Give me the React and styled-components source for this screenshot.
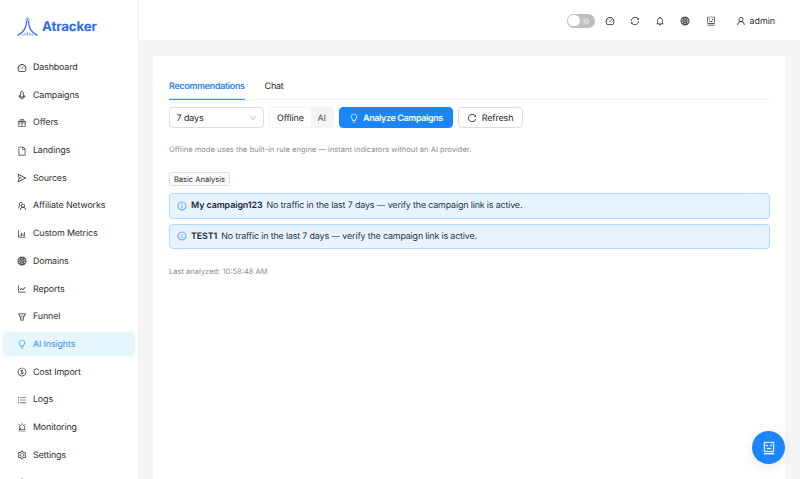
import React from 'react';
import styled, { createGlobalStyle } from 'styled-components';
import {
  AiOutlineDashboard, AiOutlineRocket, AiOutlineGift, AiOutlineFile, AiOutlineSend,
  AiOutlineTeam, AiOutlineBarChart, AiOutlineGlobal, AiOutlineLineChart, AiOutlineFunnelPlot,
  AiOutlineBulb, AiOutlineDollar, AiOutlineUnorderedList, AiOutlineAlert, AiOutlineSetting,
  AiOutlineSync, AiOutlineBell, AiOutlineRobot, AiOutlineUser, AiOutlineInfoCircle,
  AiOutlineReload, AiOutlineDown, AiOutlineSun, AiOutlineQuestionCircle,
} from 'react-icons/ai';

const GlobalStyle = createGlobalStyle`
  *, *::before, *::after { box-sizing: border-box; }
  body {
    margin: 0;
    overflow: hidden;
    background: #f5f5f5;
    color: #2b2b2b;
    font-family: Inter, "Liberation Sans", sans-serif;
    font-size: 8.9px;
    letter-spacing: -0.15px;
    text-rendering: geometricPrecision;
  }
  button { font: inherit; color: inherit; letter-spacing: inherit; text-rendering: inherit; }
  svg { display: block; flex: none; }
`;

const Shell = styled.div`
  display: flex;
  height: 479px;
  overflow: hidden;
`;

const Sidebar = styled.aside`
  width: 139px;
  flex: none;
  background: #fff;
  border-right: 1px solid #f0f0f0;
  overflow: hidden;
`;

const Brand = styled.div`
  display: flex;
  align-items: center;
  gap: 4.5px;
  height: 53.4px;
  padding-left: 16.5px;
`;

const BrandName = styled.span`
  padding-top: 1px;
  color: #2e6bea;
  font-size: 13.3px;
  font-weight: 700;
  letter-spacing: -0.15px;
`;

const Menu = styled.nav`
  display: flex;
  flex-direction: column;
  gap: 3.4px;
  padding: 1.6px 3px 0 2.5px;
`;

const MenuItem = styled.a`
  display: flex;
  align-items: center;
  flex: none;
  gap: 5.8px;
  height: 24.3px;
  padding: 0.8px 0 0 14.7px;
  border-radius: 4.5px;
  color: ${(p) => (p.$active ? '#3c8eff' : '#2e2e2e')};
  background: ${(p) => (p.$active ? '#e6f6ff' : 'transparent')};
  letter-spacing: -0.13px;
`;

const GlobeIcon = styled(AiOutlineGlobal)`
  stroke-width: 16px;
`;

const Main = styled.div`
  flex: 1;
  min-width: 0;
  display: flex;
  flex-direction: column;
`;

const TopBar = styled.header`
  display: flex;
  align-items: center;
  justify-content: flex-end;
  flex: none;
  height: 40px;
  padding: 1px 25px 0 0;
  background: #fff;
`;

const ThemeSwitch = styled.div`
  display: flex;
  align-items: center;
  justify-content: space-between;
  width: 28px;
  height: 14px;
  margin-right: 10px;
  padding: 0 4.5px 0 1.2px;
  border-radius: 7px;
  background: #bfbfbf;
  color: #fff;
  svg { stroke-width: 20px; }
`;

const SwitchKnob = styled.span`
  width: 11.6px;
  height: 11.6px;
  border-radius: 50%;
  background: #fff;
`;

const BarIcons = styled.div`
  display: flex;
  gap: 15.2px;
`;

const Account = styled.div`
  display: flex;
  align-items: center;
  gap: 4px;
  margin-left: 20px;
  letter-spacing: -0.02px;
`;

const AccountName = styled.span`
  padding-top: 1px;
`;

const Panel = styled.main`
  flex: 1;
  margin: 16px 15px 0 14px;
  padding: 16px 15px 0 16px;
  background: #fff;
`;

const Tabs = styled.div`
  display: flex;
  gap: 20px;
  height: 28px;
  border-bottom: 1px solid #f3f3f3;
`;

const Tab = styled.div`
  display: flex;
  align-items: center;
  height: 28px;
  color: ${(p) => (p.$active ? '#3484f7' : '#222')};
  text-shadow: ${(p) => (p.$active ? '0 0 0.25px currentColor' : 'none')};
  box-shadow: ${(p) => (p.$active ? 'inset 0 -1.3px #3f91ff' : 'none')};
`;

const Toolbar = styled.div`
  display: flex;
  align-items: center;
  gap: 5.1px;
  height: 21px;
  margin-top: 7px;
`;

const Select = styled.div`
  display: flex;
  align-items: center;
  justify-content: space-between;
  width: 95px;
  height: 21px;
  padding: 1px 6px 0 6.5px;
  border: 1px solid #dedede;
  border-radius: 4px;
  color: #222;
  letter-spacing: -0.05px;
  svg { color: #b5b5b5; }
`;

const Segmented = styled.div`
  display: flex;
  width: 65px;
  height: 21px;
  padding: 1.3px;
  border-radius: 4px;
  background: #f4f4f4;
`;

const Segment = styled.div`
  display: flex;
  align-items: center;
  justify-content: center;
  width: ${(p) => p.$width};
  padding: 1px 1px 0 0;
  border-radius: 3px;
  background: ${(p) => (p.$selected ? '#fff' : 'transparent')};
  color: ${(p) => (p.$selected ? '#222' : '#555')};
`;

const Button = styled.button`
  display: flex;
  align-items: center;
  justify-content: center;
  gap: 4.5px;
  width: ${(p) => p.$width};
  height: 21px;
  padding: 1px 1px 0 0;
  border: 1px solid ${(p) => (p.$primary ? '#1b86fb' : '#dedede')};
  border-radius: 4px;
  background: ${(p) => (p.$primary ? '#1b86fb' : '#fff')};
  color: ${(p) => (p.$primary ? '#fff' : '#222')};
  font-weight: ${(p) => (p.$primary ? 600 : 400)};
  letter-spacing: ${(p) => (p.$primary ? '-0.33px' : '-0.1px')};
`;

const Note = styled.p`
  margin: ${(p) => p.$top} 0 0;
  color: #8f8f8f;
  font-size: 7.55px;
  line-height: 12px;
  letter-spacing: 0;
`;

const Tag = styled.span`
  display: flex;
  align-items: center;
  justify-content: center;
  width: 61px;
  height: 14px;
  margin-top: 16px;
  border: 1px solid #dfdfdf;
  border-radius: 2.5px;
  background: #fafafa;
  color: #333;
  font-size: 7.55px;
  letter-spacing: 0;
`;

const AlertList = styled.div`
  display: flex;
  flex-direction: column;
  gap: 5px;
  margin-top: 7.3px;
`;

const Alert = styled.div`
  display: flex;
  align-items: center;
  height: 25.3px;
  padding: 0 0 0 6.5px;
  border: 1px solid #b3d7ff;
  border-radius: 4px;
  background: #e6f4ff;
  color: #26323c;
  svg { color: #4a93ff; margin-right: 4.5px; stroke-width: 12px; }
  strong { margin-right: 4px; font-weight: 600; color: #1c2630; letter-spacing: -0.08px; }
`;

const ChatButton = styled.button`
  position: fixed;
  right: 15px;
  bottom: 15px;
  display: flex;
  align-items: center;
  justify-content: center;
  width: 33px;
  height: 33px;
  padding: 0;
  border: 0;
  border-radius: 50%;
  background: #1b86fb;
  color: #fff;
  box-shadow: 0 3px 12px rgba(0, 0, 0, 0.09);
  svg { stroke-width: 18px; }
`;

const menuItems = [
  [AiOutlineDashboard, 'Dashboard'],
  [AiOutlineRocket, 'Campaigns'],
  [AiOutlineGift, 'Offers'],
  [AiOutlineFile, 'Landings'],
  [AiOutlineSend, 'Sources'],
  [AiOutlineTeam, 'Affiliate Networks'],
  [AiOutlineBarChart, 'Custom Metrics'],
  [GlobeIcon, 'Domains'],
  [AiOutlineLineChart, 'Reports'],
  [AiOutlineFunnelPlot, 'Funnel'],
  [AiOutlineBulb, 'AI Insights'],
  [AiOutlineDollar, 'Cost Import'],
  [AiOutlineUnorderedList, 'Logs'],
  [AiOutlineAlert, 'Monitoring'],
  [AiOutlineSetting, 'Settings'],
  [AiOutlineQuestionCircle, ''],
];

const barIcons = [AiOutlineDashboard, AiOutlineSync, AiOutlineBell, GlobeIcon, AiOutlineRobot];

const alerts = [
  { name: 'My campaign123', text: 'No traffic in the last 7 days — verify the campaign link is active.' },
  { name: 'TEST1', text: 'No traffic in the last 7 days — verify the campaign link is active.' },
];

function TowerLogo() {
  return (
    <svg width="21" height="20" viewBox="0 0 21 20" fill="none">
      <circle cx="10.5" cy="2.5" r="1.8" stroke="#7dabf5" strokeWidth="0.9" />
      <circle cx="10.5" cy="2.6" r="0.8" fill="#2c62ec" />
      <path d="M9.5 4.4C9.4 11 7.2 15.2 1 18.2M11.5 4.4C11.6 11 13.8 15.2 20 18.2" stroke="#3568ec" strokeWidth="1.3" strokeLinecap="round" />
      <path d="M5.8 18.6v-1.5M8.1 18.6v-2.5M10.5 18.6v-3.6M12.9 18.6v-2.5M15.2 18.6v-1.5" stroke="#72a2f4" strokeWidth="1.2" />
    </svg>
  );
}

export default function App() {
  return (
    <>
      <GlobalStyle />
      <Shell>
        <Sidebar>
          <Brand>
            <TowerLogo />
            <BrandName>Atracker</BrandName>
          </Brand>
          <Menu>
            {menuItems.map(([Icon, label], i) => (
              <MenuItem key={i} $active={label === 'AI Insights'}>
                <Icon size={10} />
                {label}
              </MenuItem>
            ))}
          </Menu>
        </Sidebar>
        <Main>
          <TopBar>
            <ThemeSwitch>
              <SwitchKnob />
              <AiOutlineSun size={8} />
            </ThemeSwitch>
            <BarIcons>
              {barIcons.map((Icon, i) => <Icon key={i} size={10} />)}
            </BarIcons>
            <Account>
              <AiOutlineUser size={10} />
              <AccountName>admin</AccountName>
            </Account>
          </TopBar>
          <Panel>
            <Tabs>
              <Tab $active>Recommendations</Tab>
              <Tab>Chat</Tab>
            </Tabs>
            <Toolbar>
              <Select>7 days<AiOutlineDown size={8} /></Select>
              <Segmented>
                <Segment $width="41px" $selected>Offline</Segment>
                <Segment $width="21.4px">AI</Segment>
              </Segmented>
              <Button $primary $width="114px"><AiOutlineBulb size={10} />Analyze Campaigns</Button>
              <Button $width="65px"><AiOutlineReload size={10} />Refresh</Button>
            </Toolbar>
            <Note $top="16px">Offline mode uses the built-in rule engine — instant indicators without an AI provider.</Note>
            <Tag>Basic Analysis</Tag>
            <AlertList>
              {alerts.map((a) => (
                <Alert key={a.name}>
                  <AiOutlineInfoCircle size={10} />
                  <strong>{a.name}</strong>
                  {a.text}
                </Alert>
              ))}
            </AlertList>
            <Note $top="17px">Last analyzed: 10:58:48 AM</Note>
          </Panel>
        </Main>
      </Shell>
      <ChatButton aria-label="Open chat"><AiOutlineRobot size={14} /></ChatButton>
    </>
  );
}
